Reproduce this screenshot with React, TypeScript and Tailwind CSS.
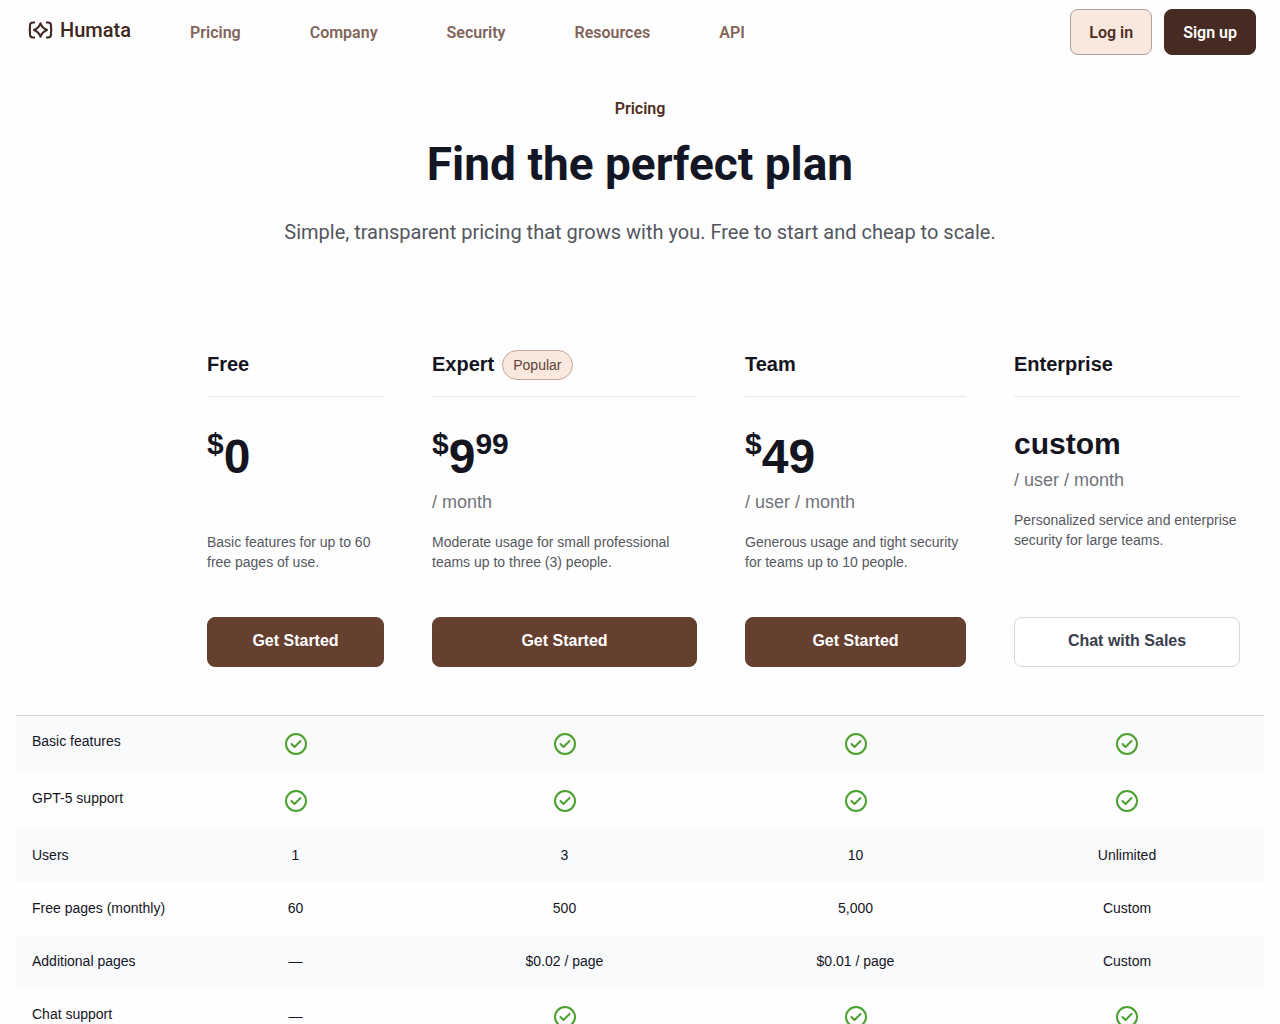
import clsx from 'clsx';

const navItems = [
  { href: '#pricing', label: 'Pricing' },
  { href: '#company', label: 'Company' },
  { href: '#security', label: 'Security' },
  { href: '#resources', label: 'Resources' },
  { href: '#api', label: 'API' },
];

const plans = [
  {
    name: 'Free',
    dollars: '0',
    description: 'Basic features for up to 60 free pages of use.',
    cta: 'Get Started',
  },
  {
    name: 'Expert',
    popular: true,
    dollars: '9',
    cents: '99',
    period: '/ month',
    description: 'Moderate usage for small professional teams up to three (3) people.',
    cta: 'Get Started',
  },
  {
    name: 'Team',
    dollars: '49',
    period: '/ user / month',
    description: 'Generous usage and tight security for teams up to 10 people.',
    cta: 'Get Started',
  },
  {
    name: 'Enterprise',
    period: '/ user / month',
    description: 'Personalized service and enterprise security for large teams.',
    cta: 'Chat with Sales',
  },
];

const features: { label: string; values: (string | boolean)[] }[] = [
  { label: 'Basic features', values: [true, true, true, true] },
  { label: 'GPT-5 support', values: [true, true, true, true] },
  { label: 'Users', values: ['1', '3', '10', 'Unlimited'] },
  { label: 'Free pages (monthly)', values: ['60', '500', '5,000', 'Custom'] },
  { label: 'Additional pages', values: ['—', '$0.02 / page', '$0.01 / page', 'Custom'] },
  { label: 'Chat support', values: ['—', true, true, true] },
];

function LogoMark() {
  return (
    <svg
      width="25"
      height="18"
      viewBox="0 0 25 18"
      fill="none"
      stroke="currentColor"
      strokeWidth="2.1"
      strokeLinejoin="round"
      aria-hidden="true"
    >
      <path d="M7 1.500H5Q2 1.500 2 4.500V7L1.700 9L2 11V13.500Q2 16.500 5 16.500H7" />
      <path d="M18 1.500H20Q23 1.500 23 4.500V7L23.300 9L23 11V13.500Q23 16.500 20 16.500H18" />
      <path d="M12.500 2.300Q14.300 7.200 19 9Q14.300 10.800 12.500 15.700Q10.700 10.800 6 9Q10.700 7.200 12.500 2.300Z" />
    </svg>
  );
}

function CheckCircle() {
  return (
    <svg
      className="mx-auto block h-6 w-6 text-[#4ca030]"
      viewBox="0 0 24 24"
      fill="none"
      stroke="currentColor"
      strokeWidth="2"
      strokeLinecap="round"
      strokeLinejoin="round"
      role="img"
      aria-label="Included"
    >
      <circle cx="12" cy="12" r="10" />
      <path d="M7.5 12L10.500 15L16.500 9" />
    </svg>
  );
}

function Header() {
  return (
    <header className="flex h-16 items-center px-6 font-['Roboto','Liberation_Sans',sans-serif] font-semibold">
      <a href="#home" className="mb-1 ml-1 flex items-center gap-[7px] text-[#3f2820]">
        <LogoMark />
        <span className="text-xl font-medium">Humata</span>
      </a>
      <nav className="ml-[59px] flex flex-1 gap-[69px] pt-0.5 text-[#81655a]">
        {navItems.map((item) => (
          <a key={item.href} href={item.href}>
            {item.label}
          </a>
        ))}
      </nav>
      <div className="flex gap-3">
        <button
          type="button"
          className="rounded-lg border border-[#b5a196] bg-[#f9e8de] px-[18px] pt-[11px] pb-[9px] text-[#4f3024]"
        >
          Log in
        </button>
        <button
          type="button"
          className="rounded-lg border border-[#472b22] bg-[#472b22] px-[18px] pt-[11px] pb-[9px] text-white"
        >
          Sign up
        </button>
      </div>
    </header>
  );
}

export default function App() {
  return (
    <div className="bg-[#fefefe] font-['Liberation_Sans',Arial,sans-serif] text-[#14151f]">
      <Header />
      <main>
        <section className="px-4 pt-[33px] text-center font-['Roboto','Liberation_Sans',sans-serif]">
          <p className="font-semibold text-[#4f3024]">Pricing</p>
          <h1 className="mt-3 text-[46px] leading-[62px] font-bold text-[#121625]">Find the perfect plan</h1>
          <p className="mt-[22px] text-xl leading-[30px] text-[#53565e]">
            Simple, transparent pricing that grows with you. Free to start and cheap to scale.
          </p>
        </section>
        <section className="mt-[95px] px-4">
          <table className="w-full table-fixed border-separate border-spacing-0">
            <colgroup>
              <col className="w-[167px]" />
              <col className="w-[225px]" />
              <col className="w-[313px]" />
              <col className="w-[269px]" />
              <col className="w-[274px]" />
            </colgroup>
            <thead className="text-left align-top">
              <tr>
                <td />
                {plans.map((plan) => (
                  <th key={plan.name} scope="col" className="px-6 pt-2 font-normal">
                    <div className="flex h-[47px] items-start gap-2 border-b border-gray-200">
                      <span className="text-xl leading-[28px] font-bold">{plan.name}</span>
                      {plan.popular && (
                        <span className="rounded-full border border-[#c5a898] bg-[#f9e8de] px-2.5 py-1 text-sm text-[#5f4336]">
                          Popular
                        </span>
                      )}
                    </div>
                  </th>
                ))}
              </tr>
              <tr>
                <td />
                {plans.map((plan) => (
                  <td key={plan.name} className="px-6 pt-[29px]">
                    {plan.dollars ? (
                      <div className="flex h-[62px] items-start font-bold">
                        <span className="text-3xl">$</span>
                        <span className="text-5xl leading-[62px]">{plan.dollars}</span>
                        {plan.cents && <span className="text-3xl">{plan.cents}</span>}
                      </div>
                    ) : (
                      <div className="h-10 text-3xl font-bold">custom</div>
                    )}
                    <p className="h-7 text-lg text-[#70737b]">{plan.period}</p>
                    <p className="mt-4 text-sm text-[#55585e]">{plan.description}</p>
                  </td>
                ))}
              </tr>
              <tr>
                <td />
                {plans.map((plan) => (
                  <td key={plan.name} className="px-6 pt-[45px] pb-12">
                    <button
                      type="button"
                      className={clsx(
                        'h-[50px] w-full rounded-lg border pb-0.5 font-bold',
                        plan.dollars
                          ? 'border-[#653f2f] bg-[#653f2f] text-white'
                          : 'border-gray-300 bg-white text-[#3b3d4d]',
                      )}
                    >
                      {plan.cta}
                    </button>
                  </td>
                ))}
              </tr>
            </thead>
            <tbody className="text-sm">
              {features.map((feature, i) => (
                <tr key={feature.label} className="odd:bg-[#f9fafc]">
                  <th
                    scope="row"
                    className={clsx(
                      'border-t px-4 pt-[15px] pb-[17px] text-left align-top font-normal',
                      i === 0 ? 'border-gray-300' : 'border-transparent',
                    )}
                  >
                    {feature.label}
                  </th>
                  {feature.values.map((value, col) => (
                    <td
                      key={plans[col].name}
                      className={clsx(
                        'border-t px-6 text-center align-middle',
                        value === true ? 'py-4' : 'pt-[15px] pb-[17px]',
                        i === 0 ? 'border-gray-300' : 'border-transparent',
                      )}
                    >
                      {value === true ? <CheckCircle /> : value}
                    </td>
                  ))}
                </tr>
              ))}
            </tbody>
          </table>
        </section>
      </main>
    </div>
  );
}
